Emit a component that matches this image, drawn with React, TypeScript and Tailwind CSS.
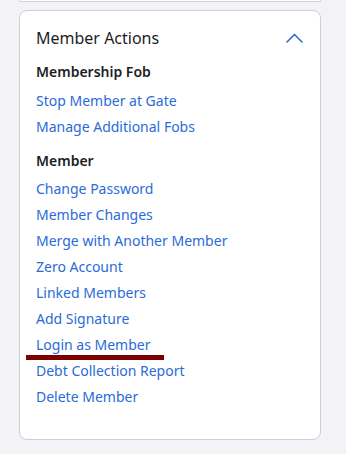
const fobLinks = ["Stop Member at Gate", "Manage Additional Fobs"];
const memberLinks = [
  "Change Password",
  "Member Changes",
  "Merge with Another Member",
  "Zero Account",
  "Linked Members",
  "Add Signature",
  "Login as Member",
  "Debt Collection Report",
  "Delete Member",
];

function LinkItem({ label, marked }: { label: string; marked?: boolean }) {
  return (
    <div className="relative h-[26px] flex items-center">
      <a href="#" className="text-[14px] leading-[20px] text-[#2a6bd8]">
        {label}
      </a>
      {marked && <div className="absolute left-[-10px] top-[23px] h-[5px] w-[138px] bg-[#7c0000]" />}
    </div>
  );
}

export default function App() {
  return (
    <div className="h-[454px] w-[346px] bg-[#f2f2f7] pl-[19px]" style={{ fontFamily: '"Noto Sans", "Open Sans", sans-serif' }}>
      <div className="h-[2px] w-[302px] rounded-b-lg border-x border-b border-[#cfcfd3] bg-white" />
      <section className="mt-[8px] h-[430px] w-[302px] rounded-lg border border-[#cfcfd3] bg-white px-[16px] pt-[16px]">
        <div className="flex items-center justify-between">
          <h2 className="text-[16px] leading-[22px] text-[#1d1d1f]">Member Actions</h2>
          <svg width="17" height="10" viewBox="0 0 17 10" fill="none" className="mr-[1px] mt-[-1px]">
            <polyline points="1,9 8.5,1.5 16,9" stroke="#2a6bd8" strokeWidth="1.6" strokeLinecap="round" strokeLinejoin="round" />
          </svg>
        </div>
        <h3 className="mt-[13px] text-[14px] leading-[20px] font-semibold text-[#1d1d1f]">Membership Fob</h3>
        <div className="mt-[6px]">
          {fobLinks.map((l) => (
            <LinkItem key={l} label={l} />
          ))}
        </div>
        <h3 className="mt-[11px] text-[14px] leading-[20px] font-semibold text-[#1d1d1f]">Member</h3>
        <div className="mt-[5px]">
          {memberLinks.map((l) => (
            <LinkItem key={l} label={l} marked={l === "Login as Member"} />
          ))}
        </div>
      </section>
    </div>
  );
}
